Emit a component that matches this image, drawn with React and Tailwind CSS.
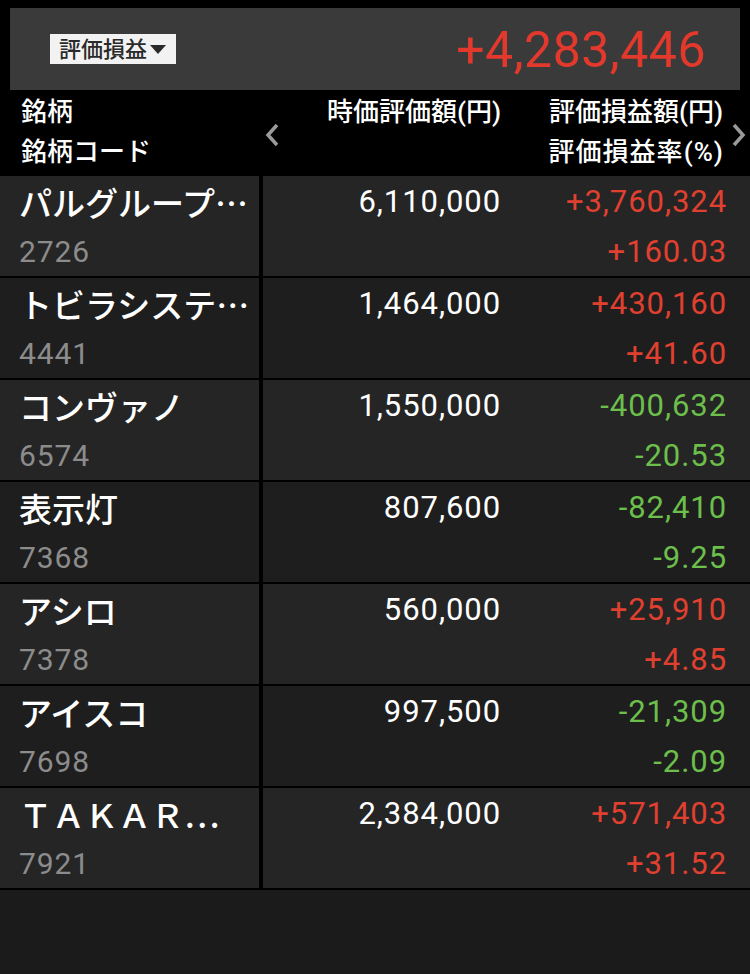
const rows = [
  { name: 'パルグループ⋯', code: '2726', value: '6,110,000', pl: '+3,760,324', rate: '+160.03' },
  { name: 'トビラシステ⋯', code: '4441', value: '1,464,000', pl: '+430,160', rate: '+41.60' },
  { name: 'コンヴァノ', code: '6574', value: '1,550,000', pl: '-400,632', rate: '-20.53' },
  { name: '表示灯', code: '7368', value: '807,600', pl: '-82,410', rate: '-9.25' },
  { name: 'アシロ', code: '7378', value: '560,000', pl: '+25,910', rate: '+4.85' },
  { name: 'アイスコ', code: '7698', value: '997,500', pl: '-21,309', rate: '-2.09' },
  { name: 'ＴＡＫＡＲ⋯', code: '7921', value: '2,384,000', pl: '+571,403', rate: '+31.52' },
];

const font = { fontFamily: 'Roboto, "Noto Sans CJK JP", sans-serif' };
const cjk = { fontFamily: '"Noto Sans CJK JP", sans-serif' };

function Chevron({ dir }) {
  return (
    <svg width="16" height="24" viewBox="0 0 16 24" className="shrink-0">
      <path
        d={dir === 'left' ? 'M13 2 L4 12 L13 22' : 'M3 2 L12 12 L3 22'}
        fill="none"
        stroke="#9a9a9a"
        strokeWidth="3.5"
      />
    </svg>
  );
}

export default function App() {
  return (
    <div className="w-[750px] h-[974px] bg-[#1b1b1b] overflow-hidden" style={font}>
      {/* Summary */}
      <div className="bg-black pt-[8px] px-[10px]">
        <div className="h-[82px] bg-[#3a3a3a] flex items-center justify-between pl-[40px] pr-[34px]">
          <div className="h-[30px] bg-[#f2f2f2] flex items-center px-[9px] gap-[2px] text-[22px] font-medium text-[#2a2a2a]">
            評価損益
            <svg width="18" height="11" viewBox="0 0 18 11">
              <path d="M1 1 L17 1 L9 10 Z" fill="#2a2a2a" />
            </svg>
          </div>
          <div className="text-[50px] leading-none text-[#e2392c] tracking-[0.01em] pt-[2px]">+4,283,446</div>
        </div>
      </div>

      {/* Header */}
      <div className="bg-black h-[84px] flex items-center text-white text-[26px] font-medium">
        <div className="w-[252px] pl-[21px] flex flex-col gap-[8px] leading-[32px]">
          <span>銘柄</span>
          <span>銘柄コード</span>
        </div>
        <div className="w-[40px] flex justify-center pt-[6px]">
          <Chevron dir="left" />
        </div>
        <div className="w-[209px] text-right self-start pt-[6px] leading-[32px]">時価評価額(円)</div>
        <div className="w-[222px] text-right flex flex-col gap-[8px] leading-[32px]">
          <span>評価損益額(円)</span>
          <span className="tracking-[0.04em] -mr-[1px]">評価損益率(%)</span>
        </div>
        <div className="flex-1 flex justify-end pr-[3px] pt-[6px]">
          <Chevron dir="right" />
        </div>
      </div>

      {/* Rows */}
      {rows.map((r, i) => (
        <div
          key={r.code}
          className={`flex h-[102px] border-t-2 border-black ${i % 2 === 0 ? 'bg-[#252525]' : 'bg-[#1e1e1e]'}`}
        >
          <div className="w-[263px] border-r-4 border-black pl-[19px] pt-[6px]">
            <div className="text-[33px] font-medium text-white leading-[40px] whitespace-nowrap" style={cjk}>
              {r.name}
            </div>
            <div className="text-[30px] text-[#8c8c8c] leading-[40px] mt-[10px] tracking-[0.03em]">{r.code}</div>
          </div>
          <div className="w-[238px] text-right text-[31px] text-white leading-[40px] pt-[6px] tracking-[0.03em]">
            {r.value}
          </div>
          <div
            className={`w-[226px] text-right text-[31px] leading-[40px] pt-[6px] tracking-[0.03em] ${
              r.pl.startsWith('-') ? 'text-[#6cbf4b]' : 'text-[#e0402f]'
            }`}
          >
            <div>{r.pl}</div>
            <div className="mt-[10px]">{r.rate}</div>
          </div>
        </div>
      ))}
      <div className="border-t-2 border-black" />
    </div>
  );
}
